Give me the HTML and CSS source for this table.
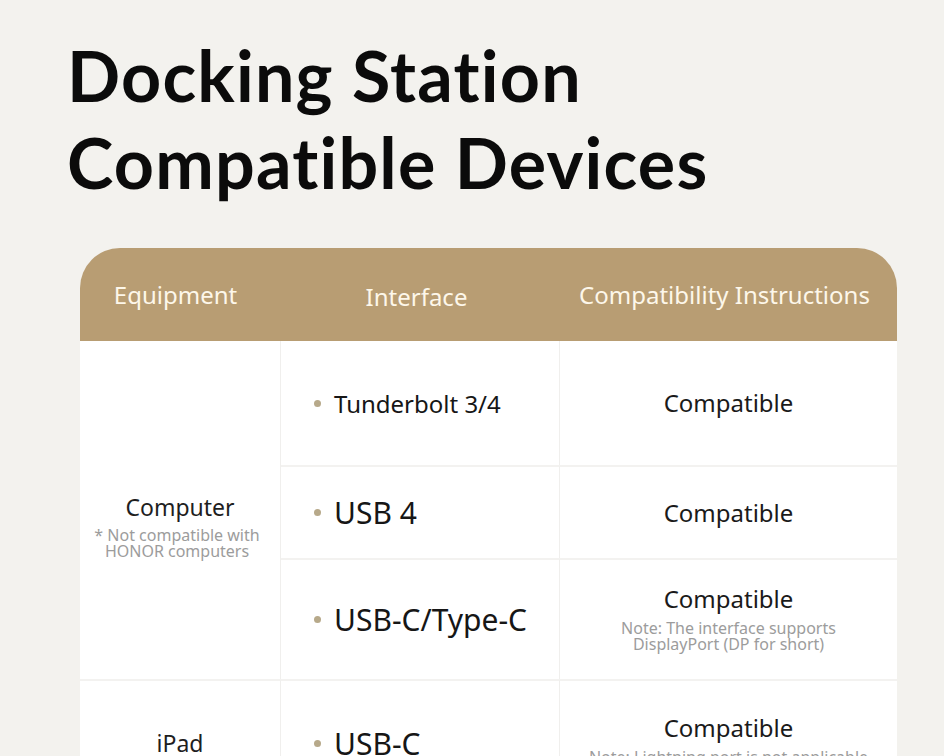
FILE: index.html
```html
<!DOCTYPE html>
<html lang="en">
<head>
<meta charset="utf-8">
<title>Docking Station Compatible Devices</title>
<link rel="stylesheet" href="styles.css">
</head>
<body>
<main class="page">
  <h1 class="title">Docking Station<br>Compatible Devices</h1>
  <section class="table">
    <div class="thead">
      <div class="th th-equip">Equipment</div>
      <div class="th th-iface">Interface</div>
      <div class="th th-compat">Compatibility Instructions</div>
    </div>
    <div class="tbody">
      <div class="cell equip equip-computer">
        <div class="equip-name">Computer</div>
        <div class="equip-note">* Not compatible with<br>HONOR computers</div>
      </div>
      <div class="cell iface r1"><span class="dot"></span><span class="iface-text small">Tunderbolt 3/4</span></div>
      <div class="cell compat r1"><div class="compat-text">Compatible</div></div>

      <div class="cell iface r2 sep"><span class="dot"></span><span class="iface-text">USB 4</span></div>
      <div class="cell compat r2 sep"><div class="compat-text">Compatible</div></div>

      <div class="cell iface r3 sep"><span class="dot"></span><span class="iface-text">USB-C/Type-C</span></div>
      <div class="cell compat r3 sep">
        <div class="compat-text">Compatible</div>
        <div class="compat-note">Note: The interface supports<br>DisplayPort (DP for short)</div>
      </div>

      <div class="cell equip r4 full"><div class="equip-name">iPad</div></div>
      <div class="cell iface r4 full"><span class="dot"></span><span class="iface-text">USB-C</span></div>
      <div class="cell compat r4 full">
        <div class="compat-text">Compatible</div>
        <div class="compat-note">Note: Lightning port is not applicable</div>
      </div>
    </div>
  </section>
</main>
</body>
</html>
```
FILE: styles.css
```css
html, body {
  margin: 0;
  padding: 0;
  background: #f3f2ee;
}
body {
  font-family: "Noto Sans", "Open Sans", sans-serif;
  color: #1c1c1c;
}
.page {
  padding: 32px 0 40px 0;
}
.title {
  margin: 0 0 42px 67px;
  font-family: Lato, "Noto Sans", sans-serif;
  font-size: 70px;
  line-height: 87px;
  font-weight: 700;
  color: #0b0b0b;
  letter-spacing: 1.2px;
}
.table {
  margin-left: 80px;
  width: 817px;
}
.thead {
  display: grid;
  grid-template-columns: 201px 279px 337px;
  height: 93px;
  background: #b89d73;
  border-radius: 40px 40px 0 0;
  align-items: center;
  color: #fdf7ea;
  font-size: 24px;
}
.th {
  text-align: center;
}
.th-equip { padding-right: 10px; }
.th-iface { padding-top: 4px; padding-right: 8px; }
.th-compat { padding-right: 8px; }
.tbody {
  display: grid;
  grid-template-columns: 201px 279px 337px;
  grid-template-rows: 124px 93px 121px 121px;
  background: #ffffff;
}
.cell {
  display: flex;
  flex-direction: column;
  justify-content: center;
}
.equip {
  align-items: center;
  border-right: 1px solid #f0efed;
}
.equip-computer {
  grid-row: 1 / span 3;
  grid-column: 1;
  padding-top: 31px;
}
.equip-name {
  font-size: 23px;
  line-height: 30px;
  color: #1e1e1e;
}
.equip-note {
  font-size: 16px;
  line-height: 16px;
  color: #9c9c9c;
  text-align: center;
  margin-top: 5px;
  margin-left: -6px;
}
.iface {
  flex-direction: row;
  align-items: center;
  justify-content: flex-start;
  padding-left: 33px;
  border-right: 1px solid #f0efed;
}
.iface-text {
  font-size: 30px;
  color: #161616;
  margin-left: 13px;
}
.iface-text.small {
  font-size: 24px;
  margin-left: 13px;
}
.dot {
  width: 7px;
  height: 7px;
  border-radius: 50%;
  background: #b7a98a;
  flex: none;
}
.compat {
  align-items: center;
  text-align: center;
}
.compat-text {
  font-size: 24px;
  line-height: 30px;
  color: #1a1a1a;
}
.compat-note {
  font-size: 16px;
  line-height: 16px;
  color: #9c9c9c;
  margin-top: 6px;
}
.r3 .compat-text,
.r4 .compat-text {
  margin-top: -3px;
}
.sep,
.full {
  border-top: 2px solid #f3f2f0;
}
.r4.equip, .r4.iface { padding-top: 5px; }
```
